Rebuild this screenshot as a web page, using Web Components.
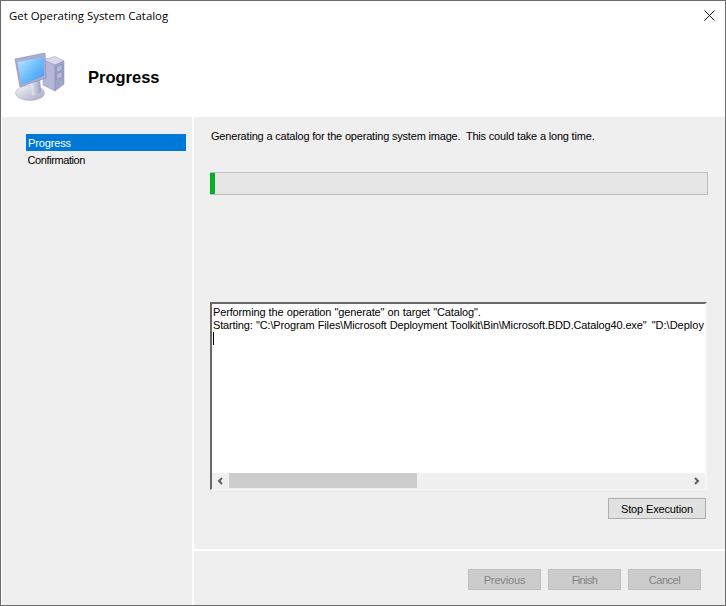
<!DOCTYPE html>
<html>
<head>
<meta charset="utf-8">
<title>Get Operating System Catalog</title>
<style>
    html, body { margin: 0; padding: 0; background: #f0f0f0; }
    body { width: 726px; height: 606px; overflow: hidden; font-family: "Liberation Sans", Arial, sans-serif; font-size: 11px; letter-spacing: -0.14px; color: #000; }
</style>
</head>
<body>
<wizard-dialog caption="Get Operating System Catalog">
    <wizard-header slot="header" heading="Progress"></wizard-header>
    <wizard-steps slot="steps"></wizard-steps>
    <progress-page slot="page"></progress-page>
    <wizard-footer slot="footer"></wizard-footer>
</wizard-dialog>

<script>
class WizardDialog extends HTMLElement {
    constructor() {
        super();
        this.attachShadow({ mode: 'open' });
        this.shadowRoot.innerHTML = `
            <style>
                :host {
                    display: flex;
                    flex-direction: column;
                    box-sizing: border-box;
                    width: 726px;
                    height: 606px;
                    background: #fff;
                    border: 1px solid #6b6b6b;
                }
                .titlebar {
                    display: flex;
                    align-items: center;
                    justify-content: space-between;
                    height: 29px;
                    padding: 0 10px 0 8px;
                    font-family: "Open Sans", "Liberation Sans", sans-serif;
                    font-size: 11.4px;
                    letter-spacing: 0;
                    color: #000;
                }
                .body {
                    flex: 1;
                    display: grid;
                    grid-template-columns: 190px minmax(0, 1fr);
                    column-gap: 2px;
                    min-height: 0;
                    padding: 0 0 0 1px;
                }
                .main { display: flex; flex-direction: column; min-height: 0; min-width: 0; }
                svg { display: block; }
            </style>
            <div class="titlebar">
                <span>${this.getAttribute('caption')}</span>
                <svg width="11" height="11" viewBox="0 0 11 11"><path d="M0.5 0.5 L10.5 10.5 M10.5 0.5 L0.5 10.5" stroke="#111" stroke-width="1" fill="none"/></svg>
            </div>
            <slot name="header"></slot>
            <div class="body">
                <slot name="steps"></slot>
                <div class="main">
                    <slot name="page"></slot>
                    <slot name="footer"></slot>
                </div>
            </div>
        `;
    }
}
customElements.define('wizard-dialog', WizardDialog);

class WizardHeader extends HTMLElement {
    constructor() {
        super();
        this.attachShadow({ mode: 'open' });
        this.shadowRoot.innerHTML = `
            <style>
                :host {
                    display: flex;
                    align-items: flex-start;
                    height: 87px;
                    padding: 20px 0 0 11px;
                    box-sizing: border-box;
                    background: #fff;
                }
                h1 {
                    margin: 18px 0 0 20px;
                    font: bold 16.5px/18px "Liberation Sans", Arial, sans-serif;
                    letter-spacing: 0;
                    color: #000;
                }
                svg { display: block; flex: none; filter: blur(0.35px); }
            </style>
            <svg width="56" height="58" viewBox="12 50 56 58">
                <defs>
                    <linearGradient id="scr" x1="0" y1="0" x2="1" y2="1">
                        <stop offset="0" stop-color="#c4e9ff"/>
                        <stop offset="0.5" stop-color="#6dbffc"/>
                        <stop offset="1" stop-color="#3f92ee"/>
                    </linearGradient>
                    <linearGradient id="base" x1="0" y1="0" x2="1" y2="1">
                        <stop offset="0" stop-color="#f4f5fa"/>
                        <stop offset="1" stop-color="#a4a8c2"/>
                    </linearGradient>
                    <linearGradient id="neck" x1="0" y1="0" x2="1" y2="0">
                        <stop offset="0" stop-color="#e8eaf4"/>
                        <stop offset="1" stop-color="#9a9ebd"/>
                    </linearGradient>
                </defs>
                <path d="M43 60 L55 56.5 L64 61 L55 65 Z" fill="#d6d9ec" stroke="#9295b8" stroke-width="0.5"/>
                <path d="M43 60 L55 65 L55 91 L43 85 Z" fill="#b4b8d6" stroke="#9295b8" stroke-width="0.5"/>
                <path d="M55 65 L64 61 L64 84 L55 91 Z" fill="#9ea3ca" stroke="#8589b0" stroke-width="0.5"/>
                <path d="M56.5 67 L62 64.5 L62 70 L56.5 72.5 Z M56.5 74 L62 71.5 L62 77 L56.5 79.5 Z" fill="#b6bbd9" stroke="#7e82aa" stroke-width="0.5"/>
                <circle cx="60.5" cy="82" r="0.9" fill="#72e06e"/>
                <ellipse cx="30" cy="93" rx="14.5" ry="7.5" fill="url(#base)" stroke="#a6a9c0" stroke-width="0.5"/>
                <path d="M31 80 L40 78 L41 92 Q36 97 32 95 Z" fill="url(#neck)"/>
                <path d="M15 59 L45 53 L46 78 L20 87 Z" fill="#a9adcf" stroke="#8488ae" stroke-width="0.6"/>
                <path d="M17.5 62 L43.5 57 L44 76 L22 84.5 Z" fill="url(#scr)"/>
            </svg>
            <h1>${this.getAttribute('heading')}</h1>
        `;
    }
}
customElements.define('wizard-header', WizardHeader);

class WizardSteps extends HTMLElement {
    constructor() {
        super();
        this.attachShadow({ mode: 'open' });
        this.shadowRoot.innerHTML = `
            <style>
                :host {
                    display: flex;
                    flex-direction: column;
                    background: #efefef;
                    padding: 17px 6px 0 24px;
                    font-size: 11px;
                }
                div { height: 17px; line-height: 19px; padding-left: 2px; color: #000; }
                .active { background: #0078d7; color: #fff; }
                .tight { letter-spacing: -0.4px; padding-left: 1.5px; }
            </style>
            <div class="active">Progress</div>
            <div class="tight">Confirmation</div>
        `;
    }
}
customElements.define('wizard-steps', WizardSteps);

class ProgressBar extends HTMLElement {
    constructor() {
        super();
        this.attachShadow({ mode: 'open' });
        this.shadowRoot.innerHTML = `
            <style>
                :host {
                    display: block;
                    box-sizing: border-box;
                    height: 23px;
                    background: #e6e6e6;
                    border: 1px solid #bcbcbc;
                    border-left: 0;
                }
                div { width: 5px; height: 100%; background: #06b025; }
            </style>
            <div></div>
        `;
    }
}
customElements.define('progress-bar', ProgressBar);

class LogBox extends HTMLElement {
    constructor() {
        super();
        this.attachShadow({ mode: 'open' });
        this.shadowRoot.innerHTML = `
            <style>
                :host {
                    display: flex;
                    flex-direction: column;
                    box-sizing: border-box;
                    height: 188px;
                    background: #fff;
                    border-style: solid;
                    border-width: 2px 2px 1px 2px;
                    border-color: #696969 #f7f7f7 #f7f7f7 #696969;
                }
                .text {
                    flex: 1;
                    min-width: 0;
                    overflow: hidden;
                    padding: 2px 0 0 1px;
                    line-height: 13px;
                    font-size: 11px;
                    word-spacing: 0.3px;
                    white-space: pre;
                }
                .path { margin-left: 2px; letter-spacing: 0; }
                .caret { width: 1px; height: 13px; background: #000; }
                .hbar {
                    display: flex;
                    align-items: flex-start;
                    height: 16px;
                    background: #f0f0f0;
                }
                .arrow { width: 17px; height: 15px; display: flex; align-items: center; justify-content: center; flex: none; }
                .thumb { width: 188px; height: 15px; background: #cdcdcd; flex: none; }
                .track { flex: 1; }
                svg { display: block; }
            </style>
            <div class="text">Performing the operation "generate" on target "Catalog".
Starting: "C:\\Program Files\\Microsoft Deployment Toolkit\\Bin\\Microsoft.BDD.Catalog40.exe" <span class="path">"D:\\Deploy</span>
<div class="caret"></div></div>
            <div class="hbar">
                <div class="arrow"><svg width="7" height="8" viewBox="0 0 7 8"><path d="M5 1 L2 4 L5 7" stroke="#606060" stroke-width="2" fill="none"/></svg></div>
                <div class="thumb"></div>
                <div class="track"></div>
                <div class="arrow"><svg width="7" height="8" viewBox="0 0 7 8"><path d="M2 1 L5 4 L2 7" stroke="#606060" stroke-width="2" fill="none"/></svg></div>
            </div>
        `;
    }
}
customElements.define('log-box', LogBox);

class WinButton extends HTMLElement {
    constructor() {
        super();
        this.attachShadow({ mode: 'open' });
        this.shadowRoot.innerHTML = `
            <style>
                :host {
                    display: flex;
                    align-items: center;
                    justify-content: center;
                    box-sizing: border-box;
                    height: 21px;
                    width: 73px;
                    font-size: 11px;
                    background: #e1e1e1;
                    border: 1px solid #adadad;
                    color: #000;
                }
                :host([disabled]) {
                    background: #cccccc;
                    border-color: #bfbfbf;
                    color: #838383;
                }
            </style>
            <slot></slot>
        `;
    }
}
customElements.define('win-button', WinButton);

class ProgressPage extends HTMLElement {
    constructor() {
        super();
        this.attachShadow({ mode: 'open' });
        this.shadowRoot.innerHTML = `
            <style>
                :host {
                    display: flex;
                    flex-direction: column;
                    box-sizing: border-box;
                    height: 432px;
                    min-width: 0;
                    background: #efefef;
                    padding: 12px 17px 0 16px;
                }
                p { margin: 0; padding-left: 1px; height: 14px; line-height: 14px; font-size: 11px; letter-spacing: -0.19px; white-space: pre; }
                progress-bar { margin-top: 29px; }
                log-box { margin: 107px 1px 0 0; }
                .actions { display: flex; justify-content: flex-end; margin-top: 8px; padding-right: 2px; }
                win-button { width: 98px; }
            </style>
            <p>Generating a catalog for the operating system image.  This could take a long time.</p>
            <progress-bar></progress-bar>
            <log-box></log-box>
            <div class="actions"><win-button>Stop Execution</win-button></div>
        `;
    }
}
customElements.define('progress-page', ProgressPage);

class WizardFooter extends HTMLElement {
    constructor() {
        super();
        this.attachShadow({ mode: 'open' });
        this.shadowRoot.innerHTML = `
            <style>
                :host {
                    flex: 1;
                    display: flex;
                    justify-content: flex-end;
                    gap: 7px;
                    box-sizing: border-box;
                    margin-top: 2px;
                    background: #efefef;
                    padding: 18px 24px 0 0;
                }
            </style>
            <win-button disabled>Previous</win-button>
            <win-button disabled style="letter-spacing: -0.6px">Finish</win-button>
            <win-button disabled style="letter-spacing: -0.45px">Cancel</win-button>
        `;
    }
}
customElements.define('wizard-footer', WizardFooter);
</script>
</body>
</html>
